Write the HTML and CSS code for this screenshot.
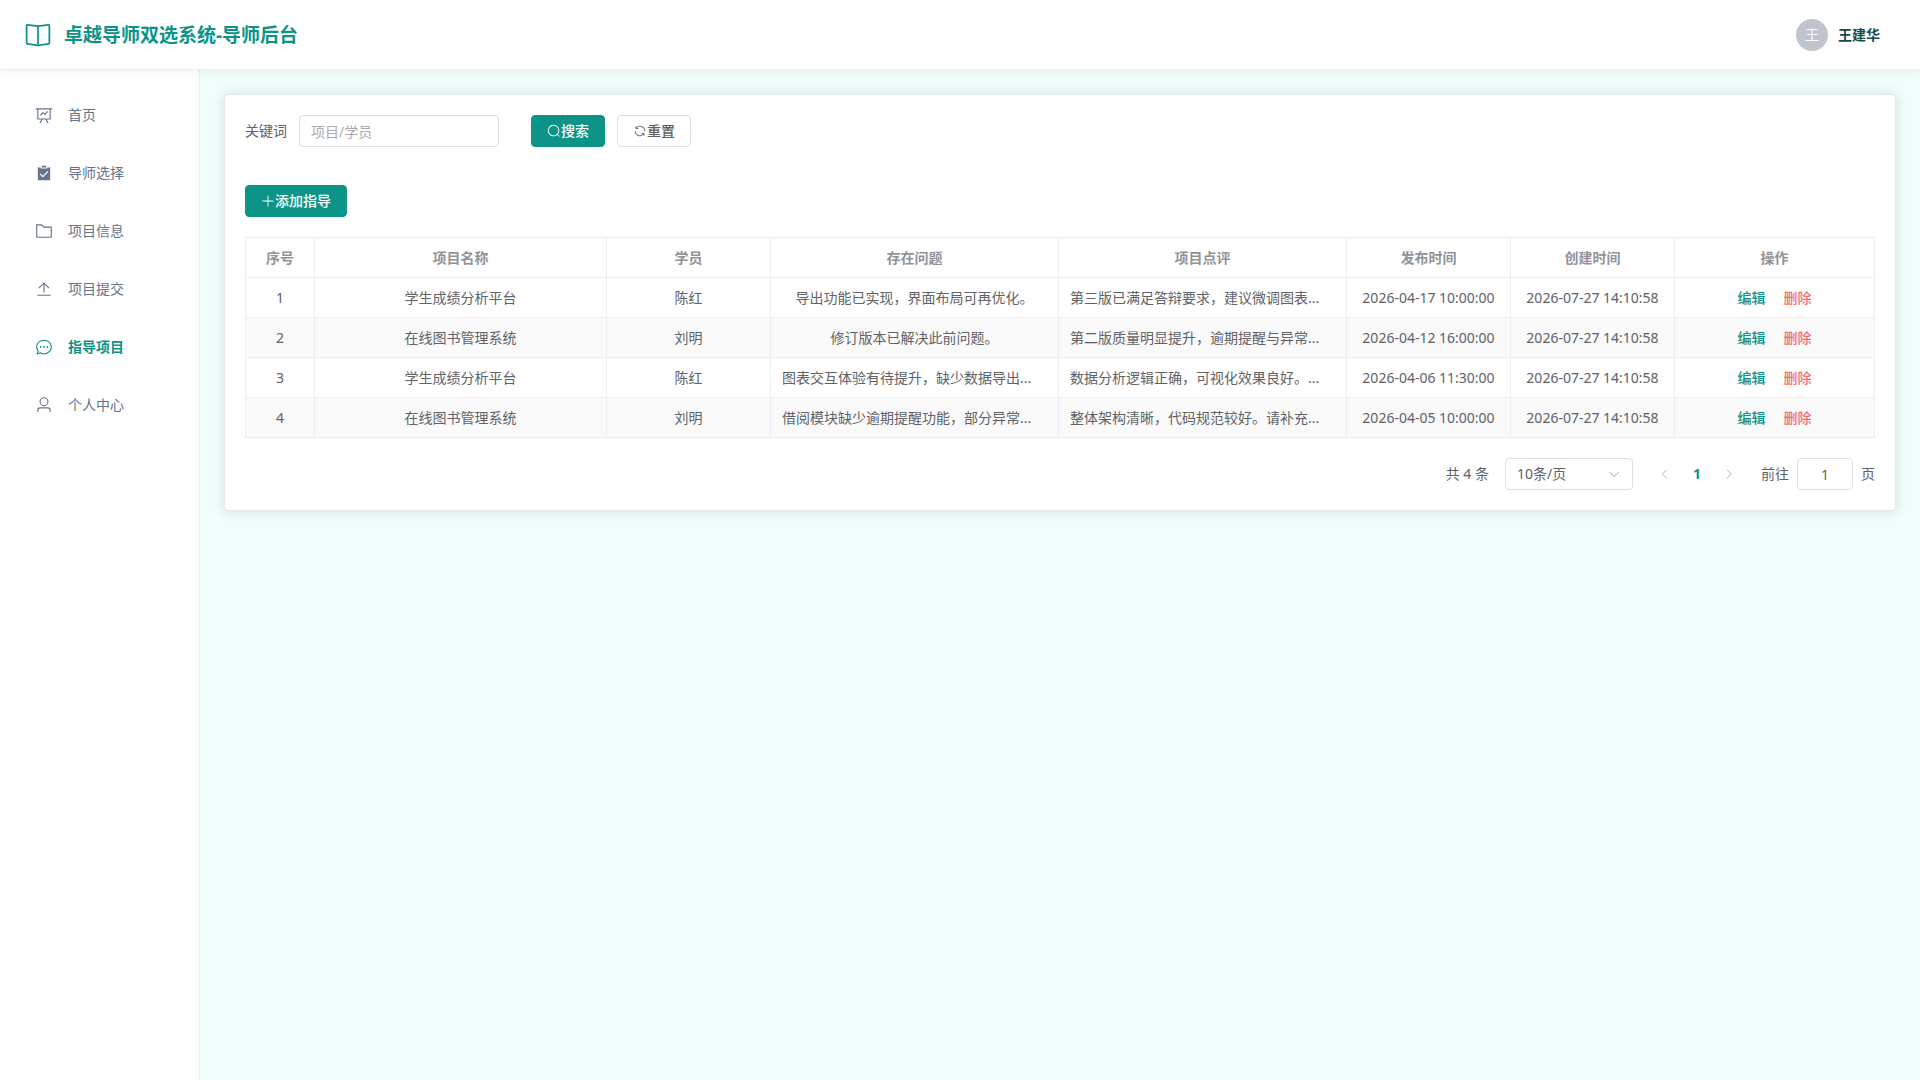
FILE: index.html
```html
<!DOCTYPE html>
<html lang="zh-CN">
<head>
<meta charset="UTF-8">
<meta name="viewport" content="width=device-width, initial-scale=1">
<title>卓越导师双选系统-导师后台</title>
<link rel="stylesheet" href="styles.css">
</head>
<body>
<header class="topbar">
  <div class="brand">
    <svg class="brand-icon" viewBox="0 0 1024 1024" aria-hidden="true"><path d="m512 863.36 384-54.848v-638.72L525.568 222.72a96 96 0 0 1-27.136 0L128 169.792v638.72zM137.024 106.432l370.432 52.928a32 32 0 0 0 9.088 0l370.432-52.928A64 64 0 0 1 960 169.792v638.72a64 64 0 0 1-54.976 63.36l-388.48 55.488a32 32 0 0 1-9.088 0l-388.48-55.488A64 64 0 0 1 64 808.512v-638.72a64 64 0 0 1 73.024-63.36z"/><path d="M480 192h64v704h-64z"/></svg>
    <h1 class="brand-title">卓越导师双选系统-导师后台</h1>
  </div>
  <div class="account">
    <span class="avatar">王</span>
    <span class="account-name">王建华</span>
  </div>
</header>
<div class="layout">
  <nav class="sidebar">
    <a class="menu-item" href="#">
      <svg class="menu-icon" viewBox="0 0 1024 1024" aria-hidden="true"><path d="M359.168 768H160a32 32 0 0 1-32-32V192H64a32 32 0 0 1 0-64h896a32 32 0 1 1 0 64h-64v544a32 32 0 0 1-32 32H665.216l110.848 192h-73.856L591.36 768H433.024L322.176 960H248.32zM832 192H192v512h640zM342.656 534.656a32 32 0 1 1-45.312-45.312L444.992 341.76l125.44 94.08L679.04 300.032a32 32 0 1 1 49.92 39.936L581.632 524.224 451.008 426.24z"/></svg>
      <span>首页</span>
    </a>
    <a class="menu-item" href="#">
      <svg class="menu-icon" viewBox="0 0 1024 1024" aria-hidden="true"><path d="M704 192h160v736H160V192h160.064v64H704zM311.616 537.28l-45.312 45.248L447.36 763.52l316.8-316.8-45.312-45.184L447.36 673.024zM384 192V96h256v96z"/></svg>
      <span>导师选择</span>
    </a>
    <a class="menu-item" href="#">
      <svg class="menu-icon" viewBox="0 0 1024 1024" aria-hidden="true"><path d="M128 192v640h768V320H485.76L357.504 192zm-32-64h287.872l128.384 128H928a32 32 0 0 1 32 32v576a32 32 0 0 1-32 32H96a32 32 0 0 1-32-32V160a32 32 0 0 1 32-32"/></svg>
      <span>项目信息</span>
    </a>
    <a class="menu-item" href="#">
      <svg class="menu-icon" viewBox="0 0 1024 1024" aria-hidden="true"><path d="M160 832h704a32 32 0 1 1 0 64H160a32 32 0 1 1 0-64m384-578.304V704h-64V247.296L237.248 490.048 192 444.8 508.8 128l316.8 316.8-45.312 45.248z"/></svg>
      <span>项目提交</span>
    </a>
    <a class="menu-item active" href="#" aria-current="page">
      <svg class="menu-icon" viewBox="0 0 1024 1024" aria-hidden="true"><path d="m174.72 855.68 135.296-45.12 23.68 11.84C388.096 849.536 448.576 864 512 864c211.84 0 384-166.784 384-352S723.84 160 512 160 128 326.784 128 512c0 69.12 24.96 139.264 70.848 199.232l22.08 28.8-46.272 115.584zm-45.248 82.56A32 32 0 0 1 89.6 896l58.368-145.92C94.72 680.32 64 596.864 64 512 64 299.904 256 96 512 96s448 203.904 448 416-192 416-448 416a461.056 461.056 0 0 1-206.912-48.384l-175.616 58.56z"/><path d="M512 563.2a51.2 51.2 0 1 1 0-102.4 51.2 51.2 0 0 1 0 102.4m192 0a51.2 51.2 0 1 1 0-102.4 51.2 51.2 0 0 1 0 102.4m-384 0a51.2 51.2 0 1 1 0-102.4 51.2 51.2 0 0 1 0 102.4"/></svg>
      <span>指导项目</span>
    </a>
    <a class="menu-item" href="#">
      <svg class="menu-icon" viewBox="0 0 1024 1024" aria-hidden="true"><path d="M512 512a192 192 0 1 0 0-384 192 192 0 0 0 0 384m0 64a256 256 0 1 1 0-512 256 256 0 0 1 0 512m320 320v-96a96 96 0 0 0-96-96H288a96 96 0 0 0-96 96v96a32 32 0 1 1-64 0v-96a160 160 0 0 1 160-160h448a160 160 0 0 1 160 160v96a32 32 0 1 1-64 0"/></svg>
      <span>个人中心</span>
    </a>
  </nav>
  <main class="content">
    <section class="card">
      <form class="search-form">
        <div class="field">
          <label class="field-label" for="keyword">关键词</label>
          <input class="input keyword" id="keyword" type="text" placeholder="项目/学员">
        </div>
        <div class="form-buttons">
          <button class="btn primary" type="button"><svg class="btn-icon" viewBox="0 0 1024 1024" aria-hidden="true"><path d="m795.904 750.72 124.992 124.928a32 32 0 0 1-45.248 45.248L750.656 795.904a416 416 0 1 1 45.248-45.248zM480 832a352 352 0 1 0 0-704 352 352 0 0 0 0 704"/></svg>搜索</button>
          <button class="btn" type="button"><svg class="btn-icon" viewBox="0 0 1024 1024" aria-hidden="true"><path d="M771.776 794.88A384 384 0 0 1 128 512h64a320 320 0 0 0 555.712 216.448H654.72a32 32 0 1 1 0-64h149.056a32 32 0 0 1 32 32v148.928a32 32 0 1 1-64 0v-50.56zM276.288 295.616h92.992a32 32 0 0 1 0 64H220.16a32 32 0 0 1-32-32V178.56a32 32 0 0 1 64 0v50.56A384 384 0 0 1 896.128 512h-64a320 320 0 0 0-555.776-216.384z"/></svg>重置</button>
        </div>
      </form>
      <div class="toolbar">
        <button class="btn primary" type="button"><svg class="btn-icon" viewBox="0 0 1024 1024" aria-hidden="true"><path d="M480 480V128a32 32 0 0 1 64 0v352h352a32 32 0 1 1 0 64H544v352a32 32 0 1 1-64 0V544H128a32 32 0 0 1 0-64z"/></svg>添加指导</button>
      </div>
      <table class="grid">
        <colgroup>
          <col class="col-index"><col class="col-project"><col class="col-short"><col class="col-long"><col class="col-long"><col class="col-short"><col class="col-short"><col class="col-actions">
        </colgroup>
        <thead>
          <tr><th>序号</th><th>项目名称</th><th>学员</th><th>存在问题</th><th>项目点评</th><th>发布时间</th><th>创建时间</th><th>操作</th></tr>
        </thead>
        <tbody>
          <tr>
            <td>1</td><td>学生成绩分析平台</td><td>陈红</td>
            <td>导出功能已实现，界面布局可再优化。</td>
            <td class="clipped">第三版已满足答辩要求，建议微调图表...</td>
            <td>2026-04-17 10:00:00</td><td>2026-07-27 14:10:58</td>
            <td><div class="actions"><button class="link" type="button">编辑</button><button class="link danger" type="button">删除</button></div></td>
          </tr>
          <tr>
            <td>2</td><td>在线图书管理系统</td><td>刘明</td>
            <td>修订版本已解决此前问题。</td>
            <td class="clipped">第二版质量明显提升，逾期提醒与异常...</td>
            <td>2026-04-12 16:00:00</td><td>2026-07-27 14:10:58</td>
            <td><div class="actions"><button class="link" type="button">编辑</button><button class="link danger" type="button">删除</button></div></td>
          </tr>
          <tr>
            <td>3</td><td>学生成绩分析平台</td><td>陈红</td>
            <td class="clipped">图表交互体验有待提升，缺少数据导出...</td>
            <td class="clipped">数据分析逻辑正确，可视化效果良好。...</td>
            <td>2026-04-06 11:30:00</td><td>2026-07-27 14:10:58</td>
            <td><div class="actions"><button class="link" type="button">编辑</button><button class="link danger" type="button">删除</button></div></td>
          </tr>
          <tr>
            <td>4</td><td>在线图书管理系统</td><td>刘明</td>
            <td class="clipped">借阅模块缺少逾期提醒功能，部分异常...</td>
            <td class="clipped">整体架构清晰，代码规范较好。请补充...</td>
            <td>2026-04-05 10:00:00</td><td>2026-07-27 14:10:58</td>
            <td><div class="actions"><button class="link" type="button">编辑</button><button class="link danger" type="button">删除</button></div></td>
          </tr>
        </tbody>
      </table>
      <div class="pagination">
        <span>共 4 条</span>
        <div class="page-size">
          <select class="input size-select" aria-label="每页条数"><option>10条/页</option></select>
          <svg class="select-arrow" viewBox="0 0 1024 1024" aria-hidden="true"><path d="M831.872 340.864 512 652.672 192.128 340.864a30.592 30.592 0 0 0-42.752 0 29.12 29.12 0 0 0 0 41.6L489.664 714.24a32 32 0 0 0 44.672 0l340.288-331.712a29.12 29.12 0 0 0 0-41.728 30.592 30.592 0 0 0-42.752 0z"/></svg>
        </div>
        <div class="pager">
          <button class="page-btn" type="button" disabled aria-label="上一页"><svg class="page-icon" viewBox="0 0 1024 1024" aria-hidden="true"><path d="M609.408 149.376 277.76 489.6a32 32 0 0 0 0 44.672l331.648 340.352a29.12 29.12 0 0 0 41.728 0 30.592 30.592 0 0 0 0-42.752L339.264 511.936l311.872-319.872a30.592 30.592 0 0 0 0-42.688 29.12 29.12 0 0 0-41.728 0z"/></svg></button>
          <button class="page-btn current" type="button" aria-current="page">1</button>
          <button class="page-btn" type="button" disabled aria-label="下一页"><svg class="page-icon" viewBox="0 0 1024 1024" aria-hidden="true"><path d="M340.864 149.312a30.592 30.592 0 0 0 0 42.752L652.736 512 340.864 831.872a30.592 30.592 0 0 0 0 42.752 29.12 29.12 0 0 0 41.728 0L714.24 534.336a32 32 0 0 0 0-44.672L382.592 149.376a29.12 29.12 0 0 0-41.728 0z"/></svg></button>
        </div>
        <div class="jump">
          <label for="goto">前往</label>
          <input class="input goto" id="goto" type="text" value="1">
          <span>页</span>
        </div>
      </div>
    </section>
  </main>
</div>
</body>
</html>
```
FILE: styles.css
```css
:root {
  --primary: #0d9488;
  --danger: #f56c6c;
  --text: #606266;
  --muted: #909399;
  --placeholder: #a8abb2;
  --border: #dcdfe6;
  --line: #ebeef5;
  --mint: #ccfbf1;
}

* {
  box-sizing: border-box;
}

body {
  margin: 0;
  min-height: 100vh;
  display: flex;
  flex-direction: column;
  background: #f0fdfa;
  color: var(--text);
  font-family: "Noto Sans", "Noto Sans CJK SC", sans-serif;
  font-size: 14px;
  line-height: 22px;
}

svg {
  display: block;
  flex: none;
  fill: currentColor;
}

button,
input,
select {
  font: inherit;
  color: inherit;
}

/* Header */
.topbar {
  position: relative;
  z-index: 1;
  display: flex;
  align-items: center;
  justify-content: space-between;
  height: 70px;
  padding: 0 40px 0 24px;
  background: #fff;
  border-bottom: 1px solid var(--mint);
  box-shadow: 0 2px 8px rgba(0, 0, 0, 0.05);
}

.brand {
  display: flex;
  align-items: center;
  gap: 12px;
  color: var(--primary);
}

.brand-icon {
  width: 28px;
  height: 28px;
}

.brand-title {
  margin: 0;
  font-size: 19px;
  line-height: 28px;
  font-weight: 700;
}

.account {
  display: flex;
  align-items: center;
  gap: 10px;
}

.avatar {
  display: flex;
  align-items: center;
  justify-content: center;
  width: 32px;
  height: 32px;
  border-radius: 50%;
  background: #c0c4cc;
  color: #fff;
}

.account-name {
  color: #134e4a;
  font-weight: 600;
}

/* Side menu */
.layout {
  flex: 1;
  display: flex;
}

.sidebar {
  flex: none;
  width: 200px;
  padding: 20px 12px;
  display: flex;
  flex-direction: column;
  gap: 8px;
  background: #fff;
  border-right: 1px solid var(--mint);
}

.menu-item {
  display: flex;
  align-items: center;
  gap: 15px;
  height: 50px;
  padding: 0 23px;
  color: #64748b;
  text-decoration: none;
}

.menu-item.active {
  color: var(--primary);
  font-weight: 600;
}

.menu-icon {
  width: 18px;
  height: 18px;
}

/* Content card */
.content {
  flex: 1;
  min-width: 0;
  padding: 24px;
}

.card {
  padding: 20px;
  background: #fff;
  border: 1px solid #e4e7ed;
  border-radius: 4px;
  box-shadow: 0 0 12px rgba(0, 0, 0, 0.12);
}

.search-form {
  display: flex;
  flex-wrap: wrap;
  gap: 16px 32px;
  margin-bottom: 38px;
}

.field,
.form-buttons {
  display: flex;
  align-items: center;
  gap: 12px;
}

.input {
  height: 32px;
  padding: 0 11px;
  background: #fff;
  border: 1px solid var(--border);
  border-radius: 4px;
}

.input::placeholder {
  color: var(--placeholder);
}

.keyword {
  width: 200px;
}

.btn {
  display: flex;
  align-items: center;
  height: 32px;
  padding: 0 15px;
  background: #fff;
  border: 1px solid var(--border);
  border-radius: 4px;
  font-weight: 500;
}

.btn.primary {
  background: var(--primary);
  border-color: var(--primary);
  color: #fff;
}

.btn-icon {
  width: 14px;
  height: 14px;
}

.toolbar {
  display: flex;
  margin-bottom: 20px;
}

/* Table */
.grid {
  width: 100%;
  table-layout: fixed;
  border-collapse: separate;
  border-spacing: 0;
  text-align: center;
}

.col-index { width: 70px; }
.col-project { width: 292px; }
.col-short { width: 164px; }
.col-long { width: 288px; }
.col-actions { width: 200px; }

.grid th,
.grid td {
  height: 40px;
  padding: 0 11px;
  border-right: 1px solid var(--line);
  border-bottom: 1px solid var(--line);
  overflow: hidden;
  white-space: nowrap;
}

.grid th {
  height: 41px;
  border-top: 1px solid var(--line);
  color: var(--muted);
  font-weight: 600;
}

.grid th:first-child,
.grid td:first-child {
  border-left: 1px solid var(--line);
}

.grid tbody tr:nth-child(even) {
  background: #fafafa;
}

.grid .clipped {
  text-align: left;
}

.actions {
  display: flex;
  justify-content: center;
  gap: 18px;
}

.link {
  padding: 0;
  background: none;
  border: 0;
  color: var(--primary);
  font-weight: 500;
}

.link.danger {
  color: var(--danger);
}

/* Pagination */
.pagination {
  display: flex;
  align-items: center;
  justify-content: flex-end;
  gap: 16px;
  margin-top: 20px;
}

.page-size {
  position: relative;
}

.size-select {
  display: block;
  width: 128px;
  appearance: none;
}

.select-arrow {
  position: absolute;
  top: 9px;
  right: 12px;
  width: 14px;
  height: 14px;
  color: var(--placeholder);
  pointer-events: none;
}

.pager {
  display: flex;
}

.page-btn {
  display: flex;
  align-items: center;
  justify-content: center;
  width: 32px;
  height: 32px;
  padding: 0;
  background: none;
  border: 0;
}

.page-btn:disabled {
  color: var(--placeholder);
}

.page-btn.current {
  color: var(--primary);
  font-weight: 700;
}

.page-icon {
  width: 12px;
  height: 12px;
}

.jump {
  display: flex;
  align-items: center;
  gap: 8px;
}

.goto {
  width: 56px;
  text-align: center;
}
```
